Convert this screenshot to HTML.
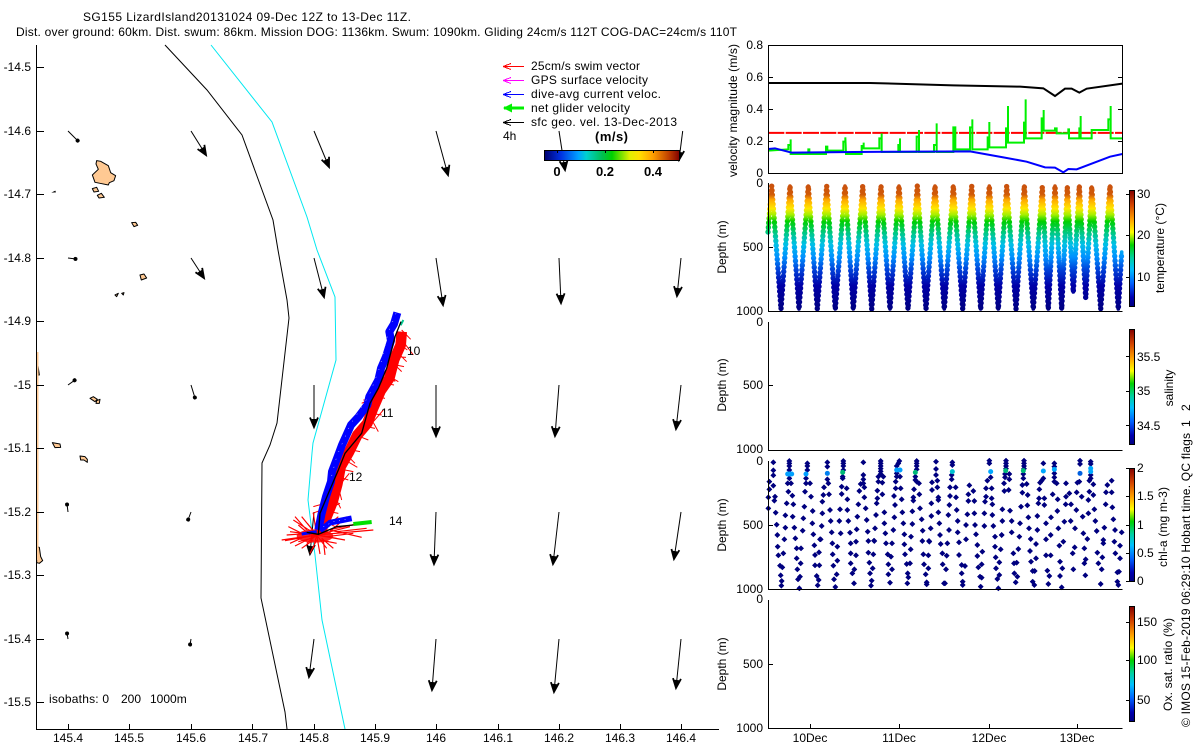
<!DOCTYPE html>
<html><head><meta charset="utf-8"><title>SG155 LizardIsland20131024</title>
<style>
html,body{margin:0;padding:0;background:#fff;width:1200px;height:750px;overflow:hidden}
svg{display:block}
text{font-family:"Liberation Sans",sans-serif;font-size:12px;fill:#000}
.ax{stroke:#000;stroke-width:1;fill:none;shape-rendering:crispEdges}
.r{text-anchor:end}.m{text-anchor:middle}
.b{font-weight:bold;font-size:13px}
.c{fill:none;stroke-width:1}
</style></head><body>
<svg width="1200" height="750" viewBox="0 0 1200 750" xmlns="http://www.w3.org/2000/svg">
<defs>
<linearGradient id="cb" x1="0" y1="0" x2="0" y2="1">
<stop offset="0" stop-color="#800000"/><stop offset=".12" stop-color="#d04000"/><stop offset=".25" stop-color="#ffa000"/><stop offset=".36" stop-color="#ffff00"/><stop offset=".47" stop-color="#00d000"/><stop offset=".58" stop-color="#00d0a0"/><stop offset=".68" stop-color="#00c0ff"/><stop offset=".8" stop-color="#0060ff"/><stop offset=".92" stop-color="#0000b0"/><stop offset="1" stop-color="#00007f"/>
</linearGradient>
<linearGradient id="hb" x1="0" y1="0" x2="1" y2="0">
<stop offset="0" stop-color="#00006f"/><stop offset=".12" stop-color="#0030e0"/><stop offset=".25" stop-color="#00a0ff"/><stop offset=".31" stop-color="#00d0d0"/><stop offset=".43" stop-color="#00c050"/><stop offset=".5" stop-color="#00d000"/><stop offset=".63" stop-color="#e0f000"/><stop offset=".7" stop-color="#ffe000"/><stop offset=".8" stop-color="#ffa000"/><stop offset=".92" stop-color="#c04000"/><stop offset="1" stop-color="#800000"/>
</linearGradient>
<linearGradient id="tp" gradientUnits="userSpaceOnUse" x1="0" y1="183" x2="0" y2="311">
<stop offset="0" stop-color="#c8500f"/><stop offset=".09" stop-color="#d05a08"/><stop offset=".13" stop-color="#ffa800"/><stop offset=".2" stop-color="#ffe800"/><stop offset=".25" stop-color="#a0f000"/><stop offset=".3" stop-color="#00d000"/><stop offset=".4" stop-color="#00c890"/><stop offset=".48" stop-color="#00c0e8"/><stop offset=".58" stop-color="#0090ff"/><stop offset=".68" stop-color="#0040d8"/><stop offset=".8" stop-color="#0000a8"/><stop offset="1" stop-color="#00007f"/>
</linearGradient>
<marker id="a" markerUnits="userSpaceOnUse" markerWidth="14" markerHeight="14" refX="11" refY="7" orient="auto"><path d="M1.5 3L11 7L1.5 11" fill="none" stroke="#000" stroke-width="1.8"/><path d="M3 4.5L11 7L3 9.5z"/></marker>
<marker id="s" markerUnits="userSpaceOnUse" markerWidth="10" markerHeight="10" refX="5" refY="5" orient="auto"><circle cx="4.5" cy="5" r="2"/></marker>
<marker id="d" markerUnits="userSpaceOnUse" markerWidth="24" markerHeight="24" refX="12" refY="12"><path d="M12 3.5L20.5 12L12 20.5L3.5 12z" fill="#00007f"/></marker>
</defs>

<!-- titles -->
<text x="83" y="21" textLength="328">SG155 LizardIsland20131024 09-Dec 12Z to 13-Dec 11Z.</text>
<text x="16" y="36" textLength="721">Dist. over ground: 60km. Dist. swum: 86km. Mission DOG: 1136km. Swum: 1090km. Gliding 24cm/s 112T COG-DAC=24cm/s 110T</text>

<!-- land -->
<g fill="#ffc993" stroke="#000" stroke-linejoin="round">
<path transform="scale(.3333)" stroke-width="3" d="M290 482L302 484L325 497L332 518L347 527L342 542L328 548L325 555L300 550L285 547L277 525L295 508L288 492z"/>
<path transform="scale(.3333)" stroke-width="3" d="M277 566L290 562L296 574L282 576zM292 586L304 580L313 592L297 594zM395 668L407 667L413 676L402 680z"/>
<path transform="scale(.3333)" stroke-width="3" d="M420 825L432 822L440 834L424 840zM345 885L355 880L350 890zM365 880L372 878L370 885z"/>
<path transform="translate(0,340) scale(.3333)" stroke-width="3" d="M270 175L280 170L292 178L285 185zM290 182L300 178L298 190L288 190zM157 308L180 312L182 322L165 323zM240 348L255 350L262 358L262 367L252 360L242 360z"/>
<path transform="translate(0,340) scale(.3333)" stroke-width="3" d="M110 40L113 70L118 105L110 105zM110 620L118 622L122 650L128 662L118 670L110 668z"/>
</g>
<path d="M37.5 352V560" stroke="#ffc993" stroke-width="1.5" fill="none" shape-rendering="crispEdges"/>
<path transform="scale(.3333)" fill="#000" d="M154 578L166 572L168 577z"/>

<!-- isobaths -->
<polyline class="c" stroke="#000" points="165,45 207,90 242,135 273,220 278,250 287,300 289,318 277,423 270,445 262,463 261,598 285,712 287,729"/>
<polyline class="c" stroke="#00e8f0" points="211,45 272,122 307,217 317,250 335,297 336,360 313,443 312,453 308,500 313,540 315,555 322,620 345,729"/>

<!-- geo arrows -->
<g stroke="#000" fill="none" stroke-width="1">
<path marker-end="url(#s)" d="M68 131L78 141"/><path marker-end="url(#s)" d="M68 258L76 259"/><path marker-end="url(#s)" d="M68 385L75 380"/><path marker-end="url(#s)" d="M191 385L195 398"/><path marker-end="url(#s)" d="M68 512L67 504"/><path marker-end="url(#s)" d="M191 512L188 520"/><path marker-end="url(#s)" d="M68 639L67 633"/><path marker-end="url(#s)" d="M191 639L190 645"/>
<path marker-end="url(#a)" d="M191 131L206 155"/><path marker-end="url(#a)" d="M314 131L329 167"/><path marker-end="url(#a)" d="M436 131L448 175"/><path marker-end="url(#a)" d="M559 131L565 170"/>
<path marker-end="url(#a)" d="M682.7 131L679 160"/>
<path marker-end="url(#a)" d="M191 258L204 278"/><path marker-end="url(#a)" d="M314 258L324 297"/><path marker-end="url(#a)" d="M436 258L443 305"/><path marker-end="url(#a)" d="M559 258L561 303"/><path marker-end="url(#a)" d="M681 258L677 296"/>
<path marker-end="url(#a)" d="M314 385L314 427"/><path marker-end="url(#a)" d="M436 385L436 436"/><path marker-end="url(#a)" d="M559 385L555 436"/><path marker-end="url(#a)" d="M681 385L676 429"/>
<path marker-end="url(#a)" d="M314 512L310 554"/><path marker-end="url(#a)" d="M436 512L434 564"/><path marker-end="url(#a)" d="M559 512L553 564"/><path marker-end="url(#a)" d="M681 512L674 559"/>
<path marker-end="url(#a)" d="M314 639L309 677"/><path marker-end="url(#a)" d="M436 639L432 690"/><path marker-end="url(#a)" d="M559 639L554 692"/><path marker-end="url(#a)" d="M681 639L676 688"/>
</g>

<!-- glider track -->
<g transform="translate(270,300) scale(.33333)" fill="none">
<polyline stroke="#f00" stroke-width="32" stroke-linejoin="round" points="395,95 392,135 372,180 358,235 332,272 308,328 292,370 262,405 236,458 212,500 202,552 188,605 168,655 150,700"/>
<path stroke="#f00" stroke-width="3" d="M395 90L422 118M400 125L430 165M392 135L412 150M385 160L410 185M380 170L408 172M378 195L402 200M370 190L395 215M360 230L385 245M365 215L375 245M345 250L372 255M335 280L275 310M320 290L345 295M300 350L325 395M305 340L335 345M310 365L340 330M270 420L300 370M290 380L315 385M270 410L295 420M225 480L262 502M245 450L270 455M235 470L255 490M205 560L238 520M225 510L250 515M205 530L235 540M210 580L215 600M175 540L205 505M180 620L128 640M195 590L212 625M190 620L210 610M350 205L330 240M280 390L245 410M165 610L130 620M155 630L205 640M160 660L195 680M175 580L160 610M185 540L165 575M300 300L280 300"/>
<path stroke="#f00" stroke-width="3.5" d="M140 705L35 720M140 705L60 695M140 705L70 660M140 705L95 650M140 705L112 670M140 705L130 640M140 705L155 612M140 705L180 660M140 705L205 650M140 705L240 680M140 705L310 690M140 705L225 720M140 705L200 715M140 705L170 745M140 705L150 762M140 705L130 745M140 705L110 730M140 705L75 738M140 705L45 722M150 695L260 672M180 690L275 712M180 695L230 650M120 700L50 705M120 705L85 675M130 720L95 745M150 720L200 730M110 690L75 650M140 720L120 760M155 715L190 745M100 712L60 730M170 710L250 700M200 695L290 685M95 700L55 680M160 720L165 765M125 715L85 725"/>
<ellipse cx="135" cy="708" rx="55" ry="20" fill="#f00" opacity=".85"/>
<polyline stroke="#00f" stroke-width="24" stroke-linejoin="round" points="382,38 372,72 358,95 363,122 348,170 333,205 325,240 298,290 292,315 266,350 243,375 216,435 203,470 186,515 183,545 168,590 155,640 145,690"/>
<polyline stroke="#fff" stroke-width="1.5" stroke-dasharray="3 22" points="378,40 354,100 330,200 298,285 240,375 200,470 182,540"/>
<polyline stroke="#00f" stroke-width="17" points="150,692 180,668 245,655"/>
<polyline stroke="#fff" stroke-width="1.5" stroke-dasharray="3 14" points="160,680 190,665 240,655"/>
<polyline stroke="#00f" stroke-width="9" points="140,695 95,702"/>
<polyline stroke="#00e000" stroke-width="12" points="250,672 305,666"/>
<polyline stroke="#00c890" stroke-width="6" points="400,60 392,76"/>
<polyline stroke="#000" stroke-width="4" points="393,65 375,110 350,205 325,265 300,310 275,400 225,460 205,510 175,580 150,640 145,703 110,697"/>
<polyline stroke="#000" stroke-width="4" points="145,703 200,680 250,675"/>
</g>
<text x="407" y="355">10</text><text x="381" y="417">11</text><text x="349" y="481">12</text><text x="389" y="525">14</text>

<!-- map axes -->
<path class="ax" d="M36.5 45V729.5H719M36.5 67.5H44M36.5 131.5H44M36.5 194.5H44M36.5 258.5H44M36.5 321.5H44M36.5 385.5H44M36.5 448.5H44M36.5 512.5H44M36.5 575.5H44M36.5 639.5H44M36.5 702.5H44
M68.5 729V724M129.5 729V724M191.5 729V724M252.5 729V724M314.5 729V724M375.5 729V724M436.5 729V724M498.5 729V724M559.5 729V724M620.5 729V724M681.5 729V724"/>
<g>
<text class="r" x="31" y="71">-14.5</text><text class="r" x="31" y="135">-14.6</text><text class="r" x="31" y="198">-14.7</text><text class="r" x="31" y="262">-14.8</text><text class="r" x="31" y="325">-14.9</text><text class="r" x="31" y="389">-15</text><text class="r" x="31" y="452">-15.1</text><text class="r" x="31" y="516">-15.2</text><text class="r" x="31" y="579">-15.3</text><text class="r" x="31" y="643">-15.4</text><text class="r" x="31" y="706">-15.5</text>
</g>
<g>
<text class="m" x="68" y="742">145.4</text><text class="m" x="129" y="742">145.5</text><text class="m" x="191" y="742">145.6</text><text class="m" x="253" y="742">145.7</text><text class="m" x="314" y="742">145.8</text><text class="m" x="375" y="742">145.9</text><text class="m" x="436" y="742">146</text><text class="m" x="498" y="742">146.1</text><text class="m" x="559" y="742">146.2</text><text class="m" x="620" y="742">146.3</text><text class="m" x="681" y="742">146.4</text>
</g>
<text x="49" y="703" textLength="60">isobaths: 0</text><text x="121" y="703">200</text><text x="150" y="703">1000m</text>

<!-- legend -->
<g fill="none" stroke-width="1" shape-rendering="crispEdges">
<path stroke="#f00" d="M503 66.5H524M503 66.5l8-3M503 66.5l8 3"/>
<path stroke="#f0f" d="M503 80.5H524M503 80.5l8-3M503 80.5l8 3"/>
<path stroke="#00f" d="M503 94.5H524M503 94.5l8-3M503 94.5l8 3"/>
<path stroke="#000" d="M503 122.5H524M503 122.5l8-3M503 122.5l8 3"/>
</g>
<path d="M504 108H524" stroke="#00f000" stroke-width="3"/><path d="M503 108l9-4.5v9z" fill="#00f000"/>
<text x="531" y="70" textLength="109">25cm/s swim vector</text><text x="531" y="84" textLength="117">GPS surface velocity</text><text x="531" y="98" textLength="130">dive-avg current veloc.</text><text x="531" y="112" textLength="99">net glider velocity</text><text x="531" y="126" textLength="146">sfc geo. vel. 13-Dec-2013</text>
<text x="503" y="140">4h</text>
<text class="b" x="595" y="141" textLength="33">(m/s)</text>
<rect x="544.5" y="150.5" width="135" height="10" fill="url(#hb)" stroke="#000" shape-rendering="crispEdges"/>
<path class="ax" d="M557.5 150V153M605.5 150V153M653.5 150V153"/>
<text class="b m" x="557" y="176">0</text><text class="b m" x="605" y="176">0.2</text><text class="b m" x="653" y="176">0.4</text>

<!-- panel 1 -->
<g transform="translate(720,30) scale(.33333)" fill="none">
<polyline stroke="#000" stroke-width="6" points="145,159 450,159 700,166 900,170 970,175 1005,198 1035,176 1055,176 1078,188 1100,176 1207,161"/>
<path stroke="#f00" stroke-width="6" stroke-dasharray="48 4" d="M145 308.5H1207"/>
<polyline stroke="#00f000" stroke-width="6" points="145,362 205,358 205,345 212,345 212,328 212,372 265,372 265,358 268,358 268,372 318,372 318,350 322,350 322,362 370,362 370,335 376,335 376,322 378,372 425,372 425,348 431,348 431,338 431,355 478,355 478,325 485,325 485,310 485,366 535,366 535,345 540,345 540,325 540,366 590,366 590,320 597,320 597,300 597,366 642,366 642,345 650,345 650,280 650,366 700,366 700,292 706,292 706,358 750,358 750,292 757,292 757,268 757,358 803,358 803,322 808,322 808,276 808,352 858,352 858,295 864,295 864,228 864,338 912,338 912,278 917,278 917,208 917,325 965,325 965,265 971,265 971,240 971,302 1005,302 1005,295 1010,295 1010,310 1045,310 1045,298 1047,298 1047,325 1078,325 1078,295 1082,295 1082,258 1082,325 1115,325 1115,300 1165,300 1165,268 1172,268 1172,228 1172,325 1207,325"/>
<polyline stroke="#00f" stroke-width="6" points="145,357 165,355 215,368 400,366 750,364 850,382 920,395 975,412 1005,413 1030,427 1045,417 1070,418 1170,380 1207,372"/>
</g>
<path class="ax" d="M768.5 45.5H1122.5V173.5H768.5zM768.5 77.5H773M768.5 109.5H773M768.5 141.5H773M1122.5 77.5H1118M1122.5 109.5H1118M1122.5 141.5H1118"/>
<text class="r" x="763" y="49">0.8</text><text class="r" x="763" y="81">0.6</text><text class="r" x="763" y="113">0.4</text><text class="r" x="763" y="145">0.2</text><text class="r" x="763" y="177">0</text>
<text transform="translate(737,177) rotate(-90)" textLength="133">velocity magnitude (m/s)</text>

<!-- panel 2 temperature -->
<path fill="none" stroke="url(#tp)" stroke-width="3.6" stroke-linecap="round" stroke-linejoin="round" d="M768 232L771.7 186L781 309L790 186L799 309L808.3 186L817.3 309L826.7 186L835.3 309L845 186L853.3 309L862.7 186L871.7 309L881 186L890 309L899 186L908 309L917.3 186L926 309L935 186L944.3 309L953.3 186L962.7 309L971.7 186L980.7 309L989.3 186L998.3 309L1006.7 186L1016 309L1024.3 186L1033.3 309L1042.3 187L1048.3 309L1055 186L1061.7 309L1067.3 187L1073.3 292L1079.3 186L1085.7 298L1091.7 187L1100.7 309L1110 186L1118.3 309L1121.7 252"/>
<path fill="none" stroke="url(#tp)" stroke-width="5.4" stroke-linecap="round" stroke-linejoin="round" stroke-dasharray="0 4.6" d="M768 232L771.7 186L781 309L790 186L799 309L808.3 186L817.3 309L826.7 186L835.3 309L845 186L853.3 309L862.7 186L871.7 309L881 186L890 309L899 186L908 309L917.3 186L926 309L935 186L944.3 309L953.3 186L962.7 309L971.7 186L980.7 309L989.3 186L998.3 309L1006.7 186L1016 309L1024.3 186L1033.3 309L1042.3 187L1048.3 309L1055 186L1061.7 309L1067.3 187L1073.3 292L1079.3 186L1085.7 298L1091.7 187L1100.7 309L1110 186L1118.3 309L1121.7 252"/>
<path class="ax" d="M768.5 183V311.5H1122.5M768.5 247.5H773"/>
<text class="r" x="763" y="187">0</text><text class="r" x="763" y="251">500</text><text class="r" x="763" y="315">1000</text>
<text class="m" transform="translate(726,247) rotate(-90)">Depth (m)</text>

<!-- panel 3 salinity -->
<path class="ax" d="M768.5 322V450.5H1122.5M768.5 385.5H773"/>
<text class="r" x="763" y="326">0</text><text class="r" x="763" y="389">500</text><text class="r" x="763" y="453">1000</text>
<text class="m" transform="translate(726,385) rotate(-90)">Depth (m)</text>

<!-- panel 4 chl -->
<g transform="translate(720,440) scale(.33333)" fill="none" stroke-width="15" stroke-linecap="round">
<path marker-start="url(#d)" marker-mid="url(#d)" marker-end="url(#d)" d="M160 67h.1M160 91h.1M160 106h.1M148 125h.1M160 137h.1M148 148h.1M165 170h.1M145 172h.1M163 182h.1M145 205h.1M167 218h.1M170 254h.1M172 285h.1M173 320h.1M175 346h.1M190 340h.1M180 377h.1M187 382h.1M182 406h.1M185 423h.1M184 437h.1
M208 63h.1M208 70h.1M208 78h.1M208 90h.1M208 115h.1M203 130h.1M213 130h.1M205 155h.1M217 167h.1M200 190h.1M220 193h.1M218 230h.1M196 226h.1M223 263h.1M196 263h.1M226 295h.1M193 298h.1M230 325h.1M243 325h.1M230 355h.1M242 370h.1M232 388h.1M240 410h.1M234 418h.1M238 445h.1
M262 70h.1M262 78h.1M262 90h.1M258 115h.1M258 130h.1M270 130h.1M255 155h.1M273 170h.1M253 200h.1M278 213h.1M250 235h.1M277 250h.1M248 272h.1M280 283h.1M300 298h.1M283 316h.1M285 345h.1M297 337h.1M285 376h.1M298 376h.1M290 408h.1M296 420h.1M293 436h.1
M322 67h.1M322 80h.1M322 118h.1M325 130h.1M312 142h.1M327 163h.1M310 165h.1M307 185h.1M330 210h.1M307 220h.1M332 243h.1M305 258h.1M335 277h.1M302 298h.1M337 310h.1M352 320h.1M338 343h.1M352 362h.1M340 377h.1M350 403h.1M342 418h.1M346 441h.1
M370 63h.1M370 70h.1M370 78h.1M370 90h.1M368 110h.1M368 115h.1M365 140h.1M380 145h.1M365 162h.1M382 178h.1M360 208h.1M382 210h.1M358 243h.1M385 243h.1M362 280h.1M390 278h.1M392 310h.1M392 340h.1M408 346h.1M392 370h.1M403 388h.1M397 400h.1M402 430h.1
M430 67h.1M430 105h.1M430 118h.1M430 130h.1M422 132h.1M418 153h.1M433 142h.1M433 172h.1M415 193h.1M437 205h.1M412 230h.1M440 240h.1M410 268h.1M443 275h.1M408 305h.1M445 303h.1M463 303h.1M445 338h.1M460 343h.1M448 368h.1M450 400h.1M458 385h.1M455 422h.1M453 437h.1
M482 63h.1M482 70h.1M482 78h.1M482 86h.1M482 94h.1M482 102h.1M475 110h.1M490 110h.1M475 125h.1M487 128h.1M472 152h.1M487 163h.1M472 175h.1M470 190h.1M493 217h.1M468 225h.1M493 250h.1M465 265h.1M496 280h.1M462 302h.1M498 310h.1M516 310h.1M503 343h.1M513 350h.1M505 373h.1M505 403h.1M516 388h.1M510 428h.1
M538 63h.1M535 70h.1M530 78h.1M530 100h.1M530 110h.1M540 110h.1M527 125h.1M527 145h.1M542 145h.1M522 168h.1M545 178h.1M525 195h.1M547 217h.1M523 232h.1M550 250h.1M520 270h.1M553 283h.1M553 313h.1M572 328h.1M555 343h.1M570 370h.1M560 372h.1M563 400h.1M565 412h.1M562 430h.1
M590 63h.1M590 70h.1M590 78h.1M590 88h.1M586 110h.1M586 120h.1M590 125h.1M597 130h.1M582 148h.1M598 163h.1M580 172h.1M580 182h.1M600 205h.1M577 214h.1M605 238h.1M577 252h.1M608 272h.1M573 290h.1M607 303h.1M627 303h.1M610 343h.1M625 346h.1M612 373h.1M625 385h.1M617 403h.1M620 427h.1M620 433h.1
M648 65h.1M648 87h.1M648 105h.1M652 122h.1M636 127h.1M652 142h.1M636 150h.1M655 172h.1M655 180h.1M634 190h.1M655 217h.1M634 228h.1M658 250h.1M632 265h.1M660 285h.1M628 305h.1M662 312h.1M682 310h.1M667 340h.1M680 347h.1M668 373h.1M678 388h.1M675 430h.1M672 430h.1
M697 67h.1M697 75h.1M695 105h.1M695 118h.1M690 142h.1M707 142h.1M690 168h.1M708 172h.1M688 195h.1M710 210h.1M685 225h.1M713 243h.1M687 270h.1M713 277h.1M717 307h.1M717 345h.1"/>
<path stroke="#00a0ff" d="M208 102h.1M203 102h.1M215 102h.1M258 102h.1M530 90h.1M540 90h.1"/>
<path stroke="#0080f0" d="M322 100h.1"/>
<path stroke="#00b878" d="M368 97h.1M586 97h.1"/>
<path stroke="#00c0d0" d="M697 95h.1"/>
</g>
<g transform="translate(960,440) scale(.33333)" fill="none" stroke-width="15" stroke-linecap="round">
<path marker-start="url(#d)" marker-mid="url(#d)" marker-end="url(#d)" d="M88 62h.1M88 70h.1M92 112h.1M82 122h.1M28 136h.1M78 145h.1M95 145h.1M25 163h.1M40 153h.1M78 170h.1M95 175h.1M25 183h.1M43 183h.1M75 185h.1M97 193h.1M73 220h.1M97 225h.1M22 223h.1M43 220h.1M18 255h.1M45 255h.1M73 258h.1M100 258h.1M48 283h.1M18 298h.1M105 290h.1M125 285h.1M52 315h.1M105 320h.1M122 328h.1M67 335h.1M52 348h.1M107 352h.1M118 367h.1M65 373h.1M55 382h.1M108 385h.1M118 405h.1M60 410h.1M65 413h.1M112 417h.1M62 440h.1M115 445h.1M8 425h.1M8 435h.1M5 400h.1M5 375h.1M15 378h.1
M138 62h.1M138 70h.1M138 78h.1M138 86h.1M135 102h.1M148 102h.1M135 112h.1M148 118h.1M132 130h.1M133 153h.1M146 150h.1M127 208h.1M150 212h.1M127 243h.1M155 243h.1M155 277h.1M180 250h.1M125 285h.1M178 290h.1M160 340h.1M175 327h.1M170 368h.1M162 370h.1M163 400h.1M172 410h.1M167 427h.1
M192 62h.1M192 70h.1M192 78h.1M192 86h.1M190 102h.1M190 115h.1M187 135h.1M200 132h.1M187 158h.1M203 165h.1M183 200h.1M202 196h.1M205 232h.1M232 228h.1M207 265h.1M232 270h.1M212 297h.1M228 312h.1M210 333h.1M228 355h.1M213 365h.1M218 393h.1M224 393h.1M218 425h.1M223 435h.1
M250 70h.1M250 115h.1M245 122h.1M240 128h.1M238 148h.1M237 175h.1M253 175h.1M235 190h.1M253 195h.1M258 250h.1M273 232h.1M293 178h.1M278 163h.1M292 213h.1
M283 70h.1M283 80h.1M283 100h.1M283 112h.1M283 125h.1M290 130h.1M318 130h.1M328 160h.1M318 170h.1M317 193h.1M333 193h.1M313 245h.1M332 243h.1M295 265h.1M345 265h.1M258 298h.1M272 285h.1M310 305h.1M298 317h.1M344 322h.1M258 346h.1M272 346h.1M338 340h.1M300 365h.1M262 392h.1M307 385h.1M268 408h.1M300 408h.1M265 432h.1M305 442h.1M340 388h.1
M360 62h.1M360 72h.1M358 125h.1M352 128h.1M350 157h.1M365 170h.1M388 155h.1M400 165h.1M385 180h.1M349 210h.1M368 230h.1M385 220h.1M403 208h.1M437 193h.1M457 202h.1M406 243h.1M433 263h.1M460 238h.1M370 280h.1M410 273h.1M382 297h.1M430 300h.1M430 310h.1M373 325h.1M412 338h.1M465 270h.1M463 305h.1M480 317h.1M377 358h.1M373 370h.1M427 352h.1M466 340h.1M480 355h.1M415 370h.1M425 388h.1M376 406h.1M472 397h.1M477 395h.1M422 432h.1M472 425h.1M475 435h.1
M392 65h.1M392 72h.1M392 105h.1M392 115h.1M388 122h.1M400 133h.1M442 135h.1M455 122h.1M438 157h.1M455 157h.1M485 277h.1"/>
<path stroke="#00a8ff" d="M92 95h.1M250 93h.1M283 88h.1M392 85h.1M392 95h.1"/>
<path stroke="#00b878" d="M137 92h.1M190 92h.1"/>
<path stroke="#0060e0" d="M360 100h.1"/>
</g>
<path class="ax" d="M768.5 461V589.5H1122.5M768.5 525.5H773"/>
<text class="r" x="763" y="465">0</text><text class="r" x="763" y="529">500</text><text class="r" x="763" y="593">1000</text>
<text class="m" transform="translate(726,525) rotate(-90)">Depth (m)</text>

<!-- panel 5 oxygen -->
<path class="ax" d="M768.5 600V728.5H1122.5M768.5 664.5H773M810.5 728V724M899.5 728V724M989.5 728V724M1077.5 728V724"/>
<text class="r" x="763" y="603">0</text><text class="r" x="763" y="668">500</text><text class="r" x="763" y="732">1000</text>
<text class="m" transform="translate(726,664) rotate(-90)">Depth (m)</text>
<text class="m" x="810" y="742">10Dec</text><text class="m" x="899" y="742">11Dec</text><text class="m" x="989" y="742">12Dec</text><text class="m" x="1077" y="742">13Dec</text>

<!-- colour bars -->
<g stroke="#000" stroke-width="1" shape-rendering="crispEdges">
<rect x="1129.5" y="190.5" width="5" height="116" fill="url(#cb)"/>
<rect x="1129.5" y="329.5" width="5" height="115" fill="url(#cb)"/>
<rect x="1129.5" y="468.5" width="5" height="113" fill="url(#cb)"/>
<rect x="1129.5" y="606.5" width="5" height="115" fill="url(#cb)"/>
</g>
<path class="ax" d="M1126 194.5H1129M1126 235.5H1129M1126 277.5H1129M1126 356.5H1129M1126 391.5H1129M1126 425.5H1129M1126 468.5H1129M1126 496.5H1129M1126 525.5H1129M1126 553.5H1129M1126 581.5H1129M1126 622.5H1129M1126 660.5H1129M1126 700.5H1129"/>
<text x="1137" y="198">30</text><text x="1137" y="239">20</text><text x="1137" y="281">10</text>
<text x="1137" y="361">35.5</text><text x="1137" y="395">35</text><text x="1137" y="430">34.5</text>
<text x="1137" y="472">2</text><text x="1137" y="500">1.5</text><text x="1137" y="529">1</text><text x="1137" y="557">0.5</text><text x="1137" y="585">0</text>
<text x="1137" y="626">150</text><text x="1137" y="664">100</text><text x="1137" y="704">50</text>
<text transform="translate(1164,293) rotate(-90)" textLength="90">temperature (°C)</text>
<text class="m" transform="translate(1173,388) rotate(-90)">salinity</text>
<text transform="translate(1167,567) rotate(-90)" textLength="80">chl-a (mg m-3)</text>
<text transform="translate(1172,711) rotate(-90)" textLength="93">Ox. sat. ratio (%)</text>
<text transform="translate(1190,727) rotate(-90)" textLength="294">© IMOS 15-Feb-2019 06:29:10 Hobart time. QC flags</text>
<text transform="translate(1190,427) rotate(-90)">1</text>
<text transform="translate(1190,411) rotate(-90)">2</text>
</svg>
</body></html>
